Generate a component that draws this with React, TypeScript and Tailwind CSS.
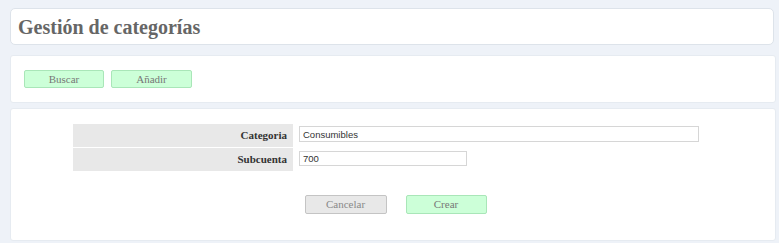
import React from 'react';

const serif = { fontFamily: '"Liberation Serif", "Times New Roman", serif' };
const sans = { fontFamily: '"Liberation Sans", Arial, sans-serif' };

const App: React.FC = () => {
  return (
    <div className="w-[779px] h-[243px] bg-[#eef2f8] pl-[10px] pr-[3px] pt-[8px] overflow-hidden" style={serif}>
      <div className="w-[764px] h-[37px] bg-white border border-[#dde3ea] rounded-[5px] flex items-center pl-[7px]">
        <h1 className="text-[20px] font-bold text-[#666] leading-none">Gestión de categorías</h1>
      </div>

      <div className="mt-[10px] h-[48px] bg-white border border-[#e6ebf1] rounded-[3px] flex items-center gap-[7px] pl-[13px]">
        <button className="w-[80px] h-[18px] bg-[#ccffd8] border border-[#a9e6b8] rounded-[2px] text-[11px] text-[#777] leading-none">
          Buscar
        </button>
        <button className="w-[81px] h-[18px] bg-[#ccffd8] border border-[#a9e6b8] rounded-[2px] text-[11px] text-[#777] leading-none">
          Añadir
        </button>
      </div>

      <div className="mt-[5px] h-[133px] bg-white border border-[#e6ebf1] rounded-[3px] pt-[15px]">
        <table className="mx-auto w-[640px] border-collapse">
          <tbody>
            <tr>
              <td className="w-[220px] h-[23px] bg-[#e8e8e8] text-right pr-[6px] text-[11px] font-bold text-[#333] border-b border-white">
                Categoria
              </td>
              <td className="pl-[6px] align-top pt-[2px]">
                <input
                  defaultValue="Consumibles"
                  className="block w-[400px] h-[16px] border border-[#d6d6d6] px-[3px] text-[9.5px] text-[#333] outline-none"
                  style={sans}
                />
              </td>
            </tr>
            <tr>
              <td className="w-[220px] h-[24px] bg-[#e8e8e8] text-right pr-[6px] text-[11px] font-bold text-[#333]">
                Subcuenta
              </td>
              <td className="pl-[6px] align-top pt-[4px]">
                <input
                  defaultValue="700"
                  className="block w-[168px] h-[15px] border border-[#d6d6d6] px-[3px] text-[9.5px] text-[#333] outline-none"
                  style={sans}
                />
              </td>
            </tr>
          </tbody>
        </table>

        <div className="mt-[24px] flex justify-center gap-[19px] pl-[5px]">
          <button className="w-[82px] h-[19px] bg-[#e8e8e8] border border-[#c4c4c4] rounded-[2px] text-[11px] text-[#888] leading-none">
            Cancelar
          </button>
          <button className="w-[81px] h-[19px] bg-[#ccffd8] border border-[#a9e6b8] rounded-[2px] text-[11px] text-[#777] leading-none">
            Crear
          </button>
        </div>
      </div>
    </div>
  );
};

export default App;
